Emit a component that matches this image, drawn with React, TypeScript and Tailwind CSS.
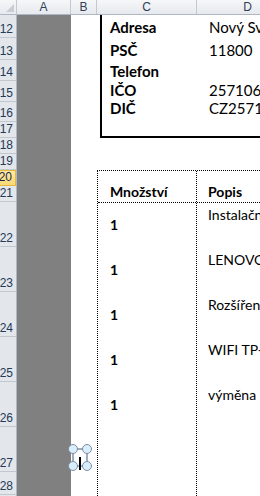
const rows = [
  { n: 12, h: 23 },
  { n: 13, h: 22 },
  { n: 14, h: 21 },
  { n: 15, h: 21 },
  { n: 16, h: 20 },
  { n: 17, h: 16 },
  { n: 18, h: 16 },
  { n: 19, h: 16 },
  { n: 20, h: 16, active: true },
  { n: 21, h: 16 },
  { n: 22, h: 45 },
  { n: 23, h: 45 },
  { n: 24, h: 45 },
  { n: 25, h: 45 },
  { n: 26, h: 45 },
  { n: 27, h: 45 },
  { n: 28, h: 23 },
];

const heights: Record<number, string> = {
  23: "h-[23px]",
  22: "h-[22px]",
  21: "h-[21px]",
  20: "h-[20px]",
  16: "h-[16px]",
  45: "h-[45px]",
};

const contact = [
  { label: "Adresa", value: "Nový Svět 1254/12", h: "h-[23px]" },
  { label: "PSČ", value: "11800", h: "h-[21px]" },
  { label: "Telefon", value: "", h: "h-[19px]" },
  { label: "IČO", value: "25710672", h: "h-[18px]" },
  { label: "DIČ", value: "CZ25710672", h: "h-[18px]" },
];

const items = [
  { qty: "1", text: "Instalační práce" },
  { qty: "1", text: "LENOVO ThinkPad" },
  { qty: "1", text: "Rozšíření záruky" },
  { qty: "1", text: "WIFI TP-LINK router" },
  { qty: "1", text: "výměna disku" },
];

function SelectionHandles() {
  return (
    <svg
      className="absolute left-[66px] top-[442px]"
      width="28"
      height="32"
      viewBox="0 0 28 32"
    >
      <rect x="7" y="7" width="14" height="17" fill="none" stroke="#3e5b82" strokeWidth="1" />
      <rect x="13" y="15" width="2" height="13" fill="#000" />
      {[
        [7, 7],
        [21, 7],
        [7, 24],
        [21, 24],
      ].map(([cx, cy], i) => (
        <circle key={i} cx={cx} cy={cy} r="4.5" fill="#d9eefa" stroke="#7a8ea6" strokeWidth="1" />
      ))}
    </svg>
  );
}

export default function App() {
  return (
    <div className="relative w-[260px] h-[496px] overflow-hidden bg-white flex flex-col font-['Lato','Noto_Sans',sans-serif]">
      {/* column headers */}
      <div className="flex h-[15px] shrink-0 border-b border-[#aeb7c3] bg-gradient-to-b from-[#f6f7f9] to-[#e6e9ee] text-[12px] leading-[14px] text-[#2f3f56] font-['Liberation_Sans',sans-serif]">
        <div className="w-[17px] shrink-0 border-r border-[#c3c9d1] relative">
          <div className="absolute right-[2px] bottom-[2px] w-0 h-0 border-l-[8px] border-l-transparent border-b-[8px] border-b-[#c9ced5]"></div>
        </div>
        <div className="w-[54px] shrink-0 border-r border-[#c3c9d1] text-center">A</div>
        <div className="w-[26px] shrink-0 border-r border-[#c3c9d1] text-center">B</div>
        <div className="w-[100px] shrink-0 border-r border-[#c3c9d1] text-center">C</div>
        <div className="w-[102px] shrink-0 border-r border-[#c3c9d1] text-center">D</div>
      </div>

      <div className="flex flex-1 min-h-0">
        {/* row headers */}
        <div className="w-[17px] shrink-0 flex flex-col bg-[#e3e6eb] border-r border-[#aeb7c3] text-[12px] leading-[14px] text-[#243a58] font-['Liberation_Sans',sans-serif]">
          {rows.map((r) => (
            <div
              key={r.n}
              className={`${heights[r.h]} shrink-0 flex items-end justify-end pr-[3px] pb-[1px] border-b ${
                r.active
                  ? "bg-gradient-to-b from-[#fde9a8] to-[#f9d877] border-[#e8b83c] border-t border-r text-[#1c2a3d]"
                  : "border-[#c2c8d0]"
              }`}
            >
              {r.n}
            </div>
          ))}
        </div>

        {/* column A */}
        <div className="w-[54px] shrink-0 bg-[#808080]"></div>

        {/* sheet content */}
        <div className="flex-1 flex flex-col min-w-0 text-black">
          {/* customer box */}
          <div className="ml-[29px] h-[123px] shrink-0 border-l-2 border-b-2 border-black pt-[3px] pl-[8px] text-[15px] leading-[18px]">
            {contact.map((c) => (
              <div key={c.label} className={`flex ${c.h} whitespace-nowrap`}>
                <div className="w-[99px] shrink-0 font-bold">{c.label}</div>
                <div>{c.value}</div>
              </div>
            ))}
          </div>

          {/* items table */}
          <div className="mt-[32px] ml-[26px] flex-1 flex flex-col border-l border-t border-dotted border-black">
            <div className="flex h-[32px] shrink-0 border-b border-dotted border-black text-[14px] font-bold">
              <div className="w-[99px] shrink-0 border-r border-dotted border-black pl-[12px] pt-[10px]">
                Množství
              </div>
              <div className="pl-[11px] pt-[10px]">Popis</div>
            </div>
            <div className="flex flex-1">
              <div className="w-[99px] shrink-0 border-r border-dotted border-black">
                {items.map((it, i) => (
                  <div key={i} className="h-[45px] pl-[12px] pt-[13px] text-[14px] font-bold leading-[17px]">
                    {it.qty}
                  </div>
                ))}
              </div>
              <div className="flex-1 min-w-0">
                {items.map((it, i) => (
                  <div
                    key={i}
                    className="h-[45px] pl-[11px] pt-[3px] text-[14px] leading-[17px] whitespace-nowrap"
                  >
                    {it.text}
                  </div>
                ))}
              </div>
            </div>
          </div>
        </div>
      </div>

      <SelectionHandles />
    </div>
  );
}
